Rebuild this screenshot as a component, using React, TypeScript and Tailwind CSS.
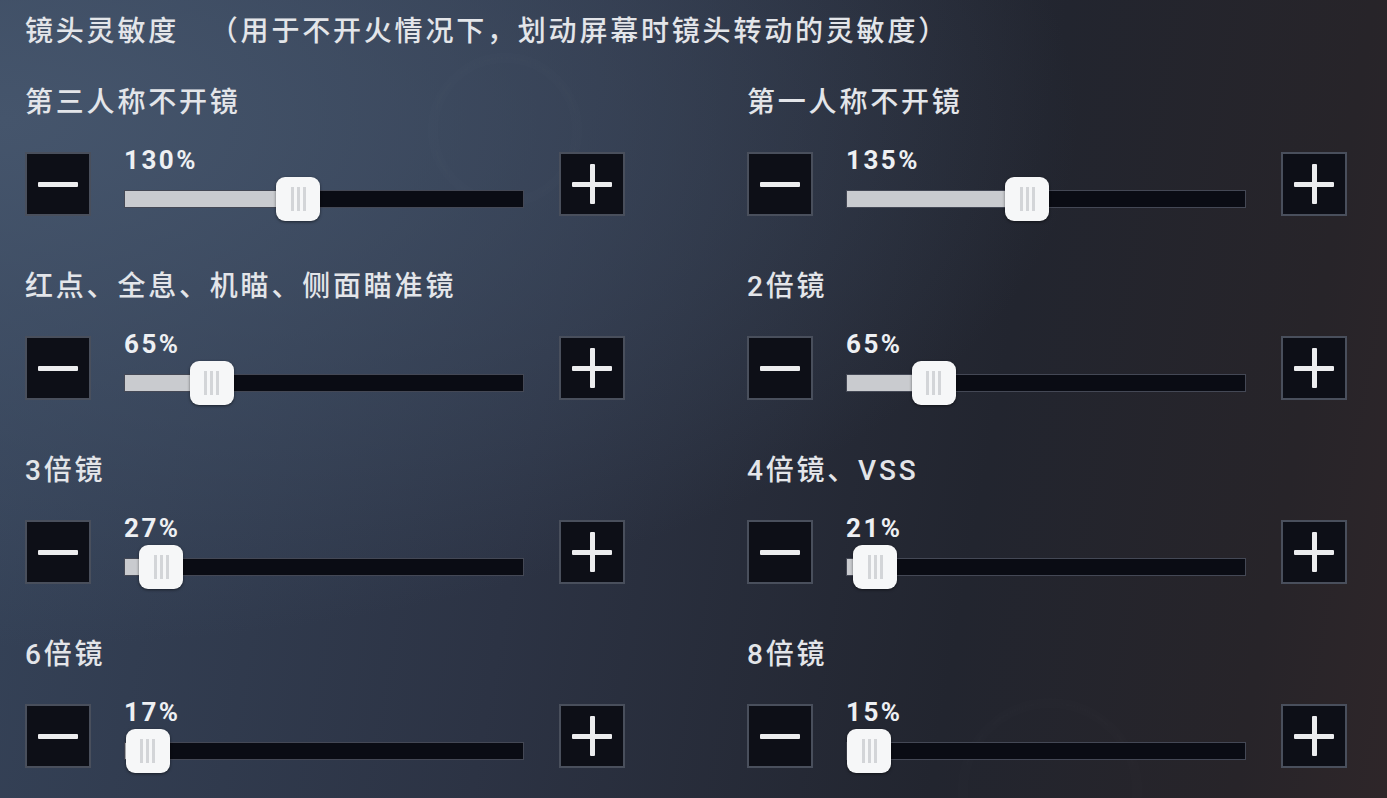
import React from "react"

type Setting = { label: string; value: number }

const settings: Setting[] = [
  { label: "第三人称不开镜", value: 130 },
  { label: "第一人称不开镜", value: 135 },
  { label: "红点、全息、机瞄、侧面瞄准镜", value: 65 },
  { label: "2倍镜", value: 65 },
  { label: "3倍镜", value: 27 },
  { label: "4倍镜、VSS", value: 21 },
  { label: "6倍镜", value: 17 },
  { label: "8倍镜", value: 15 },
]

const MAX = 300
const TRACK = 400
const THUMB = 44

const font = { fontFamily: '"Roboto", "Noto Sans CJK SC", sans-serif' }

function StepButton({ kind }: { kind: "minus" | "plus" }) {
  return (
    <button className="relative flex h-[64px] w-[66px] shrink-0 items-center justify-center border-2 border-[#646b7a]/70 bg-[#0d0f17]">
      <span className="absolute h-[5px] w-[40px] rounded-[1px] bg-[#ecedef]" />
      {kind === "plus" && <span className="absolute h-[40px] w-[5px] rounded-[1px] bg-[#ecedef]" />}
    </button>
  )
}

function Slider({ value }: { value: number }) {
  const center = (value / MAX) * TRACK
  const left = Math.min(Math.max(center - THUMB / 2, 0), TRACK - THUMB)
  return (
    <div className="-mt-[5px] flex w-[400px] flex-col">
      <span className="h-[26px] text-[26px] leading-[26px] font-bold tracking-[2.5px] text-[#eef0f3]">
        {value}%
      </span>
      <div className="relative mt-[17px] h-[18px] w-[400px] border border-[#6b7180]/60 bg-[#0a0c14]">
        <div className="absolute inset-y-0 left-0 bg-[#c9cbcf]" style={{ width: left + THUMB / 2 }} />
        <div
          className="absolute top-1/2 flex h-[44px] w-[44px] -translate-y-1/2 items-center justify-center gap-[3px] rounded-[9px] bg-[#f6f7f8] shadow-[0_1px_3px_rgba(0,0,0,0.5)]"
          style={{ left }}
        >
          <span className="h-[24px] w-[3px] bg-[#d3d5d8]" />
          <span className="h-[24px] w-[3px] bg-[#d3d5d8]" />
          <span className="h-[24px] w-[3px] bg-[#d3d5d8]" />
        </div>
      </div>
    </div>
  )
}

function SettingCell({ label, value }: Setting) {
  return (
    <div className="flex flex-col">
      <div className="h-[46px] text-[28px] leading-[46px] font-medium tracking-[2.8px] text-[#e3e5e9] [text-spacing-trim:space-all]">
        {label}
      </div>
      <div className="mt-[26px] flex items-start gap-[33px]">
        <StepButton kind="minus" />
        <Slider value={value} />
        <div className="ml-[2px]">
          <StepButton kind="plus" />
        </div>
      </div>
    </div>
  )
}

export default function App() {
  return (
    <div
      className="relative h-[798px] w-[1387px] overflow-hidden bg-[radial-gradient(ellipse_at_0%_15%,#45556c_0%,rgba(69,85,108,0)_55%),linear-gradient(100deg,#36445a_0%,#2c3344_40%,#22252f_70%,#272429_90%,#2e2629_100%)]"
      style={font}
    >
      {/* faint scenery rings behind the panel */}
      <div className="pointer-events-none absolute left-[430px] top-[55px] h-[150px] w-[150px] rounded-full border-[6px] border-white/[0.02] blur-[4px]" />
      <div className="pointer-events-none absolute left-[960px] top-[700px] h-[180px] w-[180px] rounded-full border-[6px] border-white/[0.02] blur-[4px]" />

      <div className="relative pl-[25px] pt-[9px]">
        <h1 className="h-[46px] text-[28px] leading-[46px] font-medium tracking-[2.8px] text-[#e3e5e9] [text-spacing-trim:space-all]">
          镜头灵敏度　（用于不开火情况下，划动屏幕时镜头转动的灵敏度）
        </h1>
        <div className="mt-[25px] grid grid-cols-[600px_600px] gap-x-[122px] gap-y-[48px]">
          {settings.map((s) => (
            <SettingCell key={s.label} {...s} />
          ))}
        </div>
      </div>
    </div>
  )
}
